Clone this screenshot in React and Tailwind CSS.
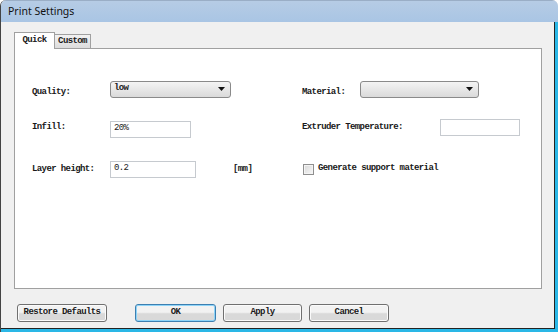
import React from "react";

const mono = "font-['Liberation_Mono','DejaVu_Sans_Mono',monospace] text-[9px] tracking-[-0.6px] text-[#1a1a1a]";

function Select({ value, w }) {
  return (
    <div className={`flex h-[17px] ${w} items-center justify-between rounded-[3px] border border-[#8a8a8a] bg-gradient-to-b from-[#f4f4f4] to-[#dadada] pl-[3px] pr-[5px]`}>
      <span className={`${mono} font-bold`}>{value}</span>
      <svg width="7" height="4" viewBox="0 0 7 4"><path d="M0 0h7L3.5 4z" fill="#111" /></svg>
    </div>
  );
}

function Input({ value, w }) {
  return (
    <div className={`flex h-[17px] ${w} items-center border border-[#c6cacf] bg-white pl-[3px]`}>
      <span className={mono}>{value}</span>
    </div>
  );
}

function Btn({ children, w, focus }) {
  return (
    <div
      className={`flex h-[18px] ${w} items-center justify-center rounded-[3px] border ${
        focus ? "border-[#3c7fb1] shadow-[inset_0_0_0_1px_#8ed4f8]" : "border-[#707070] shadow-[inset_0_0_0_1px_#fbfbfb]"
      } bg-gradient-to-b from-[#f2f2f2] from-45% to-[#d9d9d9] to-55%`}
    >
      <span className={`${mono} font-bold`}>{children}</span>
    </div>
  );
}

export default function App() {
  return (
    <div className="flex h-[332px] w-[558px] flex-col overflow-hidden rounded-t-[6px] border-l border-[#444] bg-[#f0f0f0]">
      <div className="flex h-[22px] shrink-0 items-center border-t border-[#9aaec6] bg-gradient-to-b from-[#b6cce5] to-[#a9c5e4] pl-[7px]">
        <span className="font-['Noto_Sans',sans-serif] text-[10.5px] text-[#111]">Print Settings</span>
      </div>
      <div className="flex flex-1 flex-col border-r-[3px] border-b-[3px] border-[#2ab7e6]">
        <div className="flex flex-1 flex-col border-b border-r border-[#222] pl-[13px] pr-[12px] pt-[10px]">
          <div className="flex h-[16px] items-end">
            <div className="relative z-10 -mb-px flex h-[17px] w-[41px] items-center justify-center border border-b-0 border-[#a0a0a0] bg-white">
              <span className={`${mono} font-bold`}>Quick</span>
            </div>
            <div className="flex h-[14px] w-[36px] items-center justify-center border border-l-0 border-b-0 border-[#a0a0a0] bg-gradient-to-b from-[#f2f2f2] to-[#dcdcdc]">
              <span className={`${mono} font-bold`}>Custom</span>
            </div>
          </div>
          <div className="flex h-[241px] border border-[#a0a0a0] bg-white pl-[17px] pt-[20px]">
            <div className="flex w-[270px] flex-col">
              <div className="flex h-[40px] items-center">
                <span className={`${mono} font-bold w-[78px] pt-[7px]`}>Quality:</span>
                <Select value="low" w="w-[121px]" />
              </div>
              <div className="flex h-[40px] items-center">
                <span className={`${mono} font-bold w-[78px] pb-[2px]`}>Infill:</span>
                <Input value="20%" w="w-[81px]" />
              </div>
              <div className="flex h-[40px] items-center">
                <span className={`${mono} font-bold w-[78px] pt-[2px]`}>Layer height:</span>
                <Input value="0.2" w="w-[86px]" />
                <span className={`${mono} font-bold ml-[37px] pt-[2px]`}>[mm]</span>
              </div>
            </div>
            <div className="flex flex-col">
              <div className="flex h-[40px] items-center">
                <span className={`${mono} font-bold w-[58px] pt-[7px]`}>Material:</span>
                <Select value="" w="w-[119px]" />
              </div>
              <div className="flex h-[40px] items-center">
                <span className={`${mono} font-bold w-[138px] pb-[2px]`}>Extruder Temperature:</span>
                <div className="-mt-[3px]"><Input value="" w="w-[80px]" /></div>
              </div>
              <div className="flex h-[40px] items-center gap-[4px] pl-[1px]">
                <div className="h-[11px] w-[11px] border border-[#8f8f8f] bg-gradient-to-br from-[#d8d8d8] to-[#f8f8f8] shadow-[inset_0_0_0_1px_#f4f4f4]" />
                <span className={`${mono} font-bold`}>Generate support material</span>
              </div>
            </div>
          </div>
          <div className="flex items-center pl-[3px] pt-[15px]">
            <Btn w="w-[90px]">Restore Defaults</Btn>
            <div className="ml-[28px] flex gap-[7px]">
              <Btn w="w-[81px]" focus>OK</Btn>
              <Btn w="w-[79px]">Apply</Btn>
              <Btn w="w-[80px]">Cancel</Btn>
            </div>
          </div>
        </div>
      </div>
    </div>
  );
}
